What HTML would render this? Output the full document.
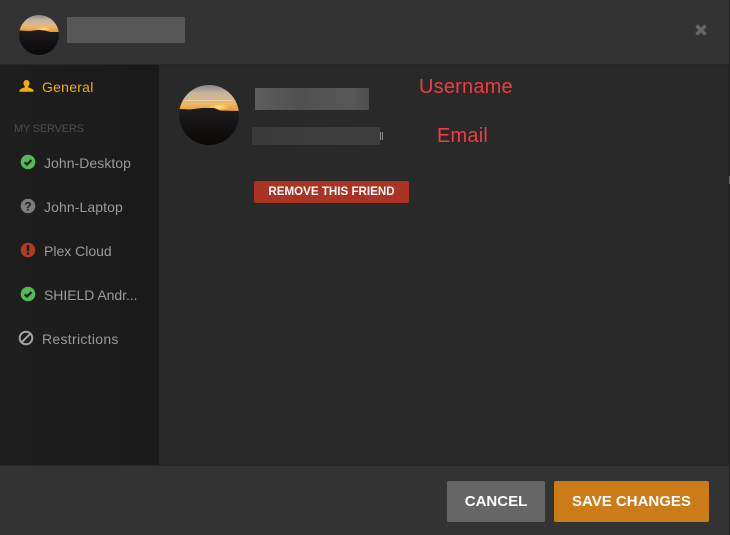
<!DOCTYPE html>
<html><head><meta charset="utf-8">
<style>
html,body{margin:0;padding:0;background:#282828;}
#r{position:relative;width:730px;height:535px;overflow:hidden;background:#292929;font-family:"Liberation Sans","DejaVu Sans",sans-serif;}
#r>div{position:absolute;}
.t{white-space:nowrap;font-size:14px;line-height:18px;color:#9a9a9a;}
</style></head>
<body><div id="r">
<div style="left:0;top:0;width:729px;height:65px;background:#333333;"></div>
<div style="left:0;top:64px;width:729px;height:1px;background:#262626;"></div>
<div style="left:0;top:65px;width:159px;height:400px;background:linear-gradient(90deg,#1e1e1e,#1c1c1c 60%,#191919);"></div>
<div style="left:0;top:465px;width:729px;height:70px;background:#333333;border-top:1px solid #272727;box-sizing:border-box;"></div>
<div style="left:729px;top:0;width:1px;height:535px;background:#1f1f1f;"></div>
<div style="left:729px;top:176px;width:1px;height:8px;background:#666;"></div>

<svg style="position:absolute;left:0;top:0;" width="730" height="535">
<defs>
<linearGradient id="sky" x1="0" y1="0" x2="0" y2="1">
<stop offset="0" stop-color="#8a8783"/><stop offset=".3" stop-color="#c4b5a0"/><stop offset=".55" stop-color="#d8b98e"/><stop offset=".72" stop-color="#eeb560"/><stop offset="1" stop-color="#e8952f"/>
</linearGradient>
<linearGradient id="land" x1="0" y1="0" x2="0" y2="1">
<stop offset="0" stop-color="#1f1d1f"/><stop offset=".5" stop-color="#131211"/><stop offset="1" stop-color="#0a0908"/>
</linearGradient>
<radialGradient id="sun"><stop offset="0" stop-color="#fff0a0"/><stop offset=".5" stop-color="#ffc850" stop-opacity=".7"/><stop offset="1" stop-color="#ffb030" stop-opacity="0"/></radialGradient>
<clipPath id="c1"><circle cx="39" cy="35" r="20"/></clipPath>
<clipPath id="c2"><circle cx="209" cy="115" r="30"/></clipPath>
</defs>
<g clip-path="url(#c1)">
<rect x="19" y="15" width="40" height="17" fill="url(#sky)"/>
<ellipse cx="44" cy="29" rx="9" ry="3" fill="url(#sun)"/>
<path d="M19 30.500 L30 31 L38 30 L45 30.500 L50 32 L59 32 V55 H19Z" fill="url(#land)"/>
</g>
<g clip-path="url(#c2)">
<rect x="179" y="85" width="60" height="27" fill="url(#sky)"/>
<rect x="185" y="100" width="48" height="1" fill="#f6d8a0" opacity=".7"/>
<ellipse cx="219" cy="107" rx="13" ry="4.500" fill="url(#sun)"/>
<path d="M179 109 L190 109.500 L202 108 L214 108 L220 110.500 L239 111 V145 H179Z" fill="url(#land)"/>
</g>
<path d="M696.500 25.500 L705.500 34.500 M705.500 25.500 L696.500 34.500" stroke="#666" stroke-width="3.600" fill="none"/>
<!-- user -->
<path d="M26.500 80 C24.600 80 23.500 81.400 23.500 83.300 C23.500 84.700 24.100 85.800 24.800 86.500 L24.800 87.300 C23 88 20.200 88.900 19.500 90.200 L19.500 91.800 L33.500 91.800 L33.500 90.200 C32.800 88.900 30 88 28.200 87.300 L28.200 86.500 C28.900 85.800 29.500 84.700 29.500 83.300 C29.500 81.400 28.400 80 26.500 80Z" fill="#f2ae0e"/>
<!-- check -->
<circle cx="28" cy="162" r="7.300" fill="#55b85a"/>
<path d="M24.700 162.300 L27 164.600 L31.400 160" fill="none" stroke="#1c1c1c" stroke-width="2.200"/>
<circle cx="28" cy="206" r="7.300" fill="#7d7d7d"/>
<text x="28" y="210.500" font-size="12" font-weight="700" text-anchor="middle" fill="#1c1c1c" font-family="Liberation Sans">?</text>
<circle cx="28" cy="250" r="7.300" fill="#b03a25"/>
<rect x="26.800" y="245" width="2.400" height="6.200" fill="#1c1c1c"/>
<rect x="26.800" y="252.300" width="2.400" height="2.300" fill="#1c1c1c"/>
<circle cx="28" cy="294" r="7.300" fill="#55b85a"/>
<path d="M24.700 294.300 L27 296.600 L31.400 292" fill="none" stroke="#1c1c1c" stroke-width="2.200"/>
<circle cx="26" cy="338" r="6.300" fill="none" stroke="#a2a2a2" stroke-width="2"/>
<path d="M21.800 342.200 L30.200 333.800" stroke="#a2a2a2" stroke-width="2"/>
</svg>

<div style="left:67px;top:17px;width:118px;height:26px;background:#575757;"></div>
<div style="left:255px;top:88px;width:114px;height:22px;background:linear-gradient(90deg,#5e5e5e,#505050 40%,#585858 85%,#4e4e4e);"></div>
<div style="left:252px;top:127px;width:128px;height:18px;background:linear-gradient(90deg,#3a3a3a,#3e3e3e);"></div>
<div style="left:380px;top:130px;width:3px;height:12px;background:linear-gradient(90deg,#888 0 1px,#333 1px 2px,#888 2px 3px);top:132px;height:8px;"></div>

<div class="t" style="left:42px;top:78px;color:#f2ae0e;letter-spacing:.25px;">General</div>
<div class="t" style="left:14px;top:120px;font-size:11px;color:#4e4e4e;letter-spacing:-.2px;">MY SERVERS</div>
<div class="t" style="left:44px;top:154px;letter-spacing:.05px;">John-Desktop</div>
<div class="t" style="left:44px;top:198px;letter-spacing:.1px;">John-Laptop</div>
<div class="t" style="left:44px;top:242px;">Plex Cloud</div>
<div class="t" style="left:44px;top:286px;letter-spacing:-.05px;">SHIELD Andr...</div>
<div class="t" style="left:42px;top:330px;letter-spacing:.3px;">Restrictions</div>

<div class="t" style="left:419px;top:75px;font-size:20px;line-height:24px;color:#ef3d42;letter-spacing:.2px;">Username</div>
<div class="t" style="left:437px;top:124px;font-size:20px;line-height:24px;color:#ef3d42;letter-spacing:.2px;">Email</div>

<div style="left:254px;top:181px;width:155px;height:22px;background:#ab3323;border-radius:2px;color:#fff;font-size:11.6px;font-weight:700;line-height:22px;text-align:center;white-space:nowrap;">REMOVE THIS FRIEND</div>
<div style="left:447px;top:481px;width:98px;height:41px;background:#666666;border-radius:2px;color:#fff;font-size:15px;font-weight:700;line-height:41px;text-align:center;white-space:nowrap;">CANCEL</div>
<div style="left:554px;top:481px;width:155px;height:41px;background:#cc7b19;border-radius:2px;color:#fff;font-size:15px;font-weight:700;line-height:41px;text-align:center;white-space:nowrap;">SAVE CHANGES</div>
</div></body></html>
